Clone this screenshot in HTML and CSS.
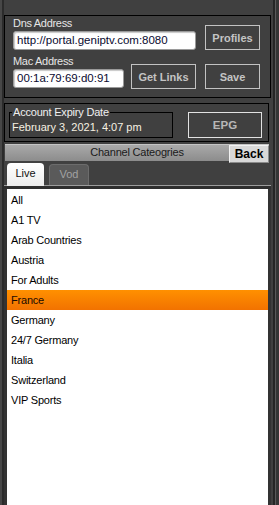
FILE: index.html
```html
<!DOCTYPE html>
<html>
<head>
<meta charset="utf-8">
<link rel="stylesheet" href="styles.css">
</head>
<body>
<div class="app">
  <div class="edge-left"></div>
  <div class="main">
    <section class="conn">
      <div class="conn-row">
        <div class="field field-wide">
          <div class="label">Dns Address</div>
          <div class="input">http://portal.geniptv.com:8080</div>
        </div>
        <button class="btn btn-side">Profiles</button>
      </div>
      <div class="conn-row">
        <div class="field field-narrow">
          <div class="label label-second">Mac Address</div>
          <div class="input input-last">00:1a:79:69:d0:91</div>
        </div>
        <button class="btn btn-links">Get Links</button>
        <button class="btn btn-side">Save</button>
      </div>
    </section>

    <section class="acct">
      <fieldset class="expiry">
        <legend class="expiry-legend">Account Expiry Date</legend>
        <div class="expiry-date">February 3, 2021, 4:07 pm</div>
      </fieldset>
      <button class="btn btn-epg">EPG</button>
    </section>

    <div class="cat-bar">
      <span class="cat-title">Channel Cateogries</span>
      <button class="back">Back</button>
    </div>

    <div class="tabs">
      <div class="tab tab-active">Live</div>
      <div class="tab tab-idle">Vod</div>
    </div>

    <div class="list-wrap">
      <ul class="list">
        <li class="item">All</li>
        <li class="item">A1 TV</li>
        <li class="item">Arab Countries</li>
        <li class="item">Austria</li>
        <li class="item">For Adults</li>
        <li class="item item-selected">France</li>
        <li class="item">Germany</li>
        <li class="item">24/7 Germany</li>
        <li class="item">Italia</li>
        <li class="item">Switzerland</li>
        <li class="item">VIP Sports</li>
      </ul>
    </div>
  </div>
  <div class="edge-right"></div>
</div>
</body>
</html>
```

FILE: styles.css
```css
* {
  box-sizing: border-box;
  margin: 0;
  padding: 0;
}

html, body {
  width: 279px;
  height: 505px;
  overflow: hidden;
}

body {
  background: #404040;
  font-family: "Liberation Sans", Arial, sans-serif;
  font-size: 11px;
  color: #e8e8e8;
}

.app {
  display: flex;
  height: 505px;
}

.edge-left {
  width: 4px;
  background: linear-gradient(to right, #474747 0 2px, #2b2b2b 2px 4px);
}

.main {
  width: 267px;
  display: flex;
  flex-direction: column;
}

.edge-right {
  flex: 1;
  background: linear-gradient(to right, #404040 0 2px, #262626 2px 4px, #5a5a5a 4px 5px, #353535 5px);
}

/* connection panel */
.conn {
  margin-top: 15px;
  border: 1px solid #000;
  padding: 0 8px 8px 8px;
  display: flex;
  flex-direction: column;
}

.conn-row {
  display: flex;
  align-items: flex-end;
  gap: 9px;
}

.field {
  display: flex;
  flex-direction: column;
}

.field-wide { width: 183px; }
.field-narrow { width: 111px; margin-right: -2px; }

.label {
  line-height: 15px;
  height: 15px;
  color: #e6e6e6;
  letter-spacing: -0.3px;
}

.label-second {
  height: 19px;
  padding-top: 4px;
}

.input {
  height: 19px;
  background: #fff;
  border: 1px solid #9a9a9a;
  border-radius: 3px;
  box-shadow: inset 1px 1px 1px #c8c8c8;
  padding-left: 3px;
  font-size: 11.5px;
  line-height: 17px;
  color: #0a0a30;
  white-space: nowrap;
  overflow: hidden;
}

.input-last { margin-bottom: 1px; }

.btn {
  background: transparent;
  border: 1px solid #c2c2c2;
  color: #c4c4c4;
  font-family: "Liberation Sans", Arial, sans-serif;
  font-weight: bold;
  font-size: 11px;
  height: 25px;
}

.btn-side { width: 55px; }
.btn-links { width: 65px; }

/* account panel */
.acct {
  margin-top: 5px;
  width: 265px;
  border: 1px solid #000;
  padding: 2px 0 3px 4px;
  display: flex;
  align-items: flex-end;
  gap: 15px;
}

.expiry {
  width: 164px;
  border: 1px solid #000;
  padding: 3px 2px 3px 2px;
  min-width: 0;
}

.expiry-legend {
  padding: 0 1px;
  line-height: 12px;
  color: #f0f0f0;
  letter-spacing: -0.2px;
}

.expiry-date {
  line-height: 13px;
  color: #f6f0e2;
  white-space: nowrap;
}

.btn-epg {
  width: 74px;
  height: 26px;
  border-color: #e2e2e2;
  color: #b8b8b8;
  font-size: 11.5px;
}

/* category bar */
.cat-bar {
  position: relative;
  margin: 2px 2px 0 1px;
  height: 17px;
  border-top: 1px solid #c4c4c4;
  background: linear-gradient(#a9a9a9, #8c8c8c);
  text-align: center;
  line-height: 15px;
  color: #1a1a1a;
}

.cat-title {
  letter-spacing: -0.2px;
}

.back {
  position: absolute;
  right: 0;
  top: 0;
  width: 40px;
  height: 18px;
  background: #d8d8d8;
  border: 1px solid;
  border-color: #f2f2f2 #8a8a8a #8a8a8a #f2f2f2;
  font-family: "Liberation Sans", Arial, sans-serif;
  font-weight: bold;
  font-size: 12px;
  color: #000;
}

/* tabs */
.tabs {
  height: 28px;
  display: flex;
  align-items: flex-end;
  gap: 5px;
  padding-left: 3px;
  border-bottom: 3px solid #2e2e2e;
  box-shadow: inset 0 -1px 0 #9c9c9c;
}

.tab {
  height: 22px;
  border-radius: 4px 4px 0 0;
  text-align: center;
  line-height: 20px;
}

.tab-active {
  width: 37px;
  height: 23px;
  background: linear-gradient(#ffffff, #ececec);
  color: #111;
}

.tab-idle {
  width: 40px;
  height: 21px;
  margin-bottom: 1px;
  background: #5a5a5a;
  border: 1px solid #6c6c6c;
  border-bottom: none;
  color: #a2a2a2;
  line-height: 18px;
}

/* list */
.list-wrap {
  flex: 1;
  display: flex;
  padding: 0 3px 0 3px;
  background: #333;
}

.list {
  list-style: none;
  flex: 1;
  background: #fff;
  padding-top: 1px;
}

.item {
  height: 20px;
  line-height: 20px;
  padding-left: 4px;
  color: #000;
  letter-spacing: -0.2px;
}

.item-selected {
  background: linear-gradient(#ff9000, #f27200);
  color: #1a0a00;
}
```
